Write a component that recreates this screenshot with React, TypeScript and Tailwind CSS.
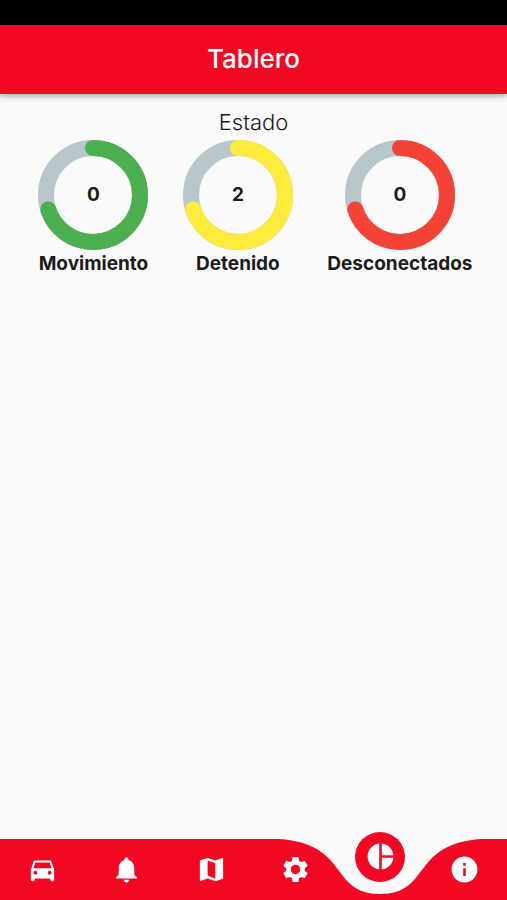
import { useState } from "react";
import type { IconType } from "react-icons";
import {
  MdDirectionsCar,
  MdInfo,
  MdMap,
  MdNotifications,
  MdPieChart,
  MdSettings,
} from "react-icons/md";

type Status = { label: string; value: number; arc: string };

const statuses: Status[] = [
  { label: "Movimiento", value: 0, arc: "stroke-[#4caf50]" },
  { label: "Detenido", value: 2, arc: "stroke-[#ffeb3b]" },
  { label: "Desconectados", value: 0, arc: "stroke-[#f44336]" },
];

const tabs: { label: string; icon: IconType }[] = [
  { label: "Vehículos", icon: MdDirectionsCar },
  { label: "Notificaciones", icon: MdNotifications },
  { label: "Mapa", icon: MdMap },
  { label: "Ajustes", icon: MdSettings },
  { label: "Tablero", icon: MdPieChart },
  { label: "Información", icon: MdInfo },
];

function StatusRing({ label, value, arc }: Status) {
  return (
    <div className="flex flex-col items-center">
      <div className="grid size-[110px] place-items-center">
        <svg viewBox="0 0 110 110" className="col-start-1 row-start-1 size-full -rotate-90" fill="none" aria-hidden="true">
          <circle cx="55" cy="55" r="47" strokeWidth="16" className="stroke-[#b8c7cb]" />
          <circle
            cx="55"
            cy="55"
            r="47"
            strokeWidth="16"
            strokeLinecap="round"
            pathLength="100"
            strokeDasharray="70 100"
            className={arc}
          />
        </svg>
        <span className="col-start-1 row-start-1 text-[19px] leading-7 font-bold">{value}</span>
      </div>
      <h3 className="text-[19px] leading-7 font-bold">{label}</h3>
    </div>
  );
}

function BottomBar() {
  const [active, setActive] = useState(4);
  // The notch is centred under the active tab; each tab is 84.5 units wide.
  const c = 84.5 * (active + 0.5);
  const notch = `M-200 0H${c - 101}C${c - 30} 5 ${c - 51} 55 ${c} 55S${c + 30} 5 ${c + 101} 0H707V61H-200Z`;

  return (
    <nav className="grid h-[61px] shrink-0" aria-label="Principal">
      <svg viewBox="0 0 507 61" preserveAspectRatio="none" className="col-start-1 row-start-1 h-[61px] w-full" aria-hidden="true">
        <path d={notch} fill="#f30824" />
      </svg>
      <div className="col-start-1 row-start-1 grid grid-cols-6">
        {tabs.map(({ label, icon: Icon }, i) => (
          <button
            key={label}
            type="button"
            aria-label={label}
            aria-current={i === active ? "page" : undefined}
            onClick={() => setActive(i)}
            className={`flex h-[61px] items-center justify-center text-white ${i === active ? "-mt-[13px]" : ""}`}
          >
            <span className={`flex size-[50px] items-center justify-center rounded-full ${i === active ? "bg-[#f30824]" : ""}`}>
              <Icon size={31} />
            </span>
          </button>
        ))}
      </div>
    </nav>
  );
}

export default function App() {
  return (
    <div className="flex min-h-screen flex-col bg-[#fafafa] font-[Inter,'Noto_Sans',sans-serif] text-[#1c1c1c]">
      <div className="h-[25px] bg-black" />
      <header className="flex h-[69px] items-center justify-center bg-[#f30824] pb-0.5 shadow-[0_2px_6px_rgba(0,0,0,0.35)]">
        <h1 className="text-[26px] leading-8 font-medium text-white">Tablero</h1>
      </header>
      <main className="flex-1 pt-4">
        <h2 className="mb-1.5 text-center text-[22px] leading-6 font-light">Estado</h2>
        <section className="flex justify-evenly pl-1" aria-label="Estado">
          {statuses.map((s) => (
            <StatusRing key={s.label} {...s} />
          ))}
        </section>
      </main>
      <BottomBar />
    </div>
  );
}
